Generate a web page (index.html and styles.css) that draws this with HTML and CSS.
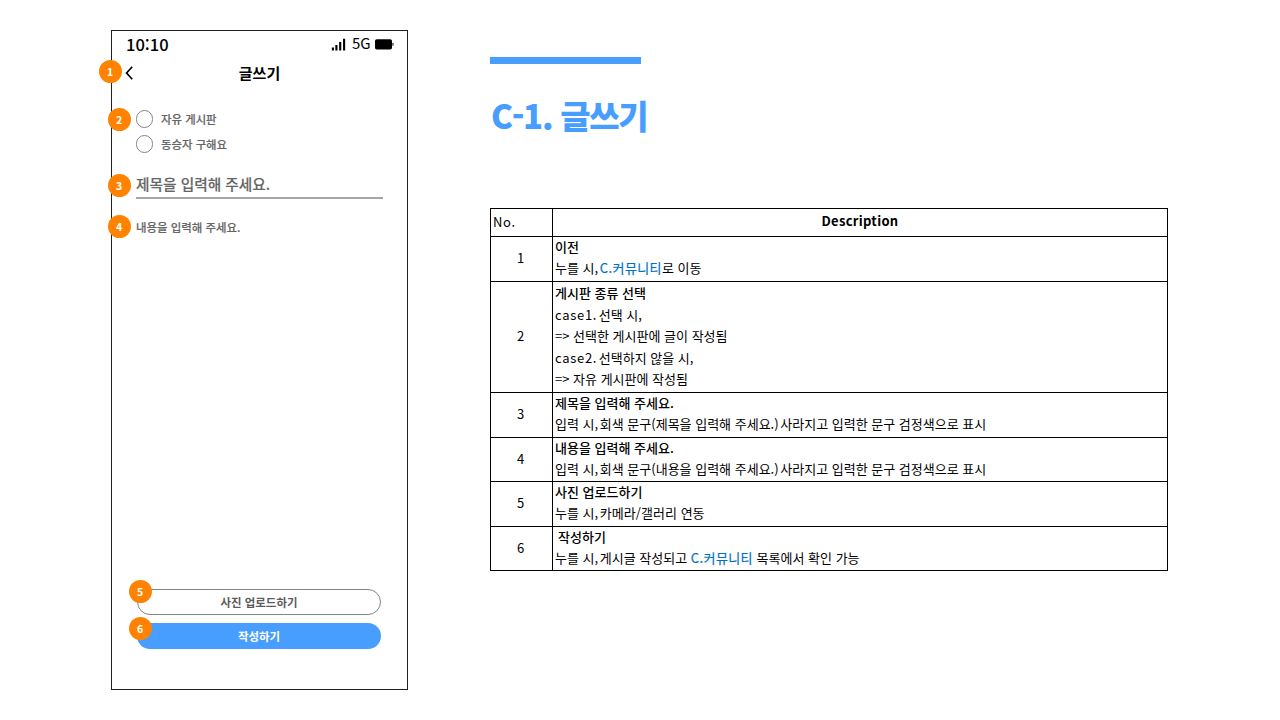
FILE: index.html
```html
<!DOCTYPE html>
<html lang="ko">
<head>
<meta charset="utf-8">
<title>C-1. 글쓰기</title>
<link rel="stylesheet" href="styles.css">
</head>
<body>
<main class="page">
  <section class="phone">
    <div class="status">
      <span class="time">10:10</span>
      <svg class="signal" width="15" height="13" viewBox="0 0 15 13"><path d="M1.9 12.5V9.5M5.4 12.5V7M9.2 12.5V4M13.1 12.5V.8" stroke="#000" stroke-width="2.1" fill="none"/></svg>
      <span class="network">5G</span>
      <svg class="battery" width="20" height="11" viewBox="0 0 20 11"><rect x="0" y=".3" width="17" height="10.2" rx="1.8"/><rect x="17.2" y="3.8" width="1.5" height="3" rx=".6" fill="#555"/></svg>
    </div>
    <header class="topbar">
      <i class="badge b1">1</i>
      <svg class="back" width="9" height="14" viewBox="0 0 9 14"><path d="M7.2 .8L1.6 7l5.6 6.2" fill="none" stroke="#000" stroke-width="1.7"/></svg>
      <h2 class="screen-title">글쓰기</h2>
    </header>
    <div class="boards">
      <i class="badge b2">2</i>
      <label class="option"><span class="radio"></span>자유 게시판</label>
      <label class="option"><span class="radio"></span>동승자 구해요</label>
    </div>
    <div class="subject"><i class="badge b3">3</i><span>제목을 입력해 주세요.</span></div>
    <div class="content"><i class="badge b4">4</i><span>내용을 입력해 주세요.</span></div>
    <div class="actions">
      <div class="btn outline"><i class="badge b5">5</i>사진 업로드하기</div>
      <div class="btn solid"><i class="badge b6">6</i>작성하기</div>
    </div>
  </section>
  <section class="doc">
    <div class="bar"></div>
    <h1 class="title">C-1. 글쓰기</h1>
    <div class="table">
      <div class="no head">No.</div>
      <div class="desc head center"><b>Description</b></div>
      <div class="no">1</div>
      <div class="desc"><b>이전</b><p>누를 시,<span class="tight"> </span><a>C.커뮤니티</a>로 이동</p></div>
      <div class="no">2</div>
      <div class="desc tall"><b>게시판 종류 선택</b><p><span class="latin">case1.</span><span class="tight"> </span>선택 시,</p><p>=&gt; 선택한 게시판에 글이 작성됨</p><p><span class="latin">case2.</span><span class="tight"> </span>선택하지 않을 시,</p><p>=&gt; 자유 게시판에 작성됨</p></div>
      <div class="no">3</div>
      <div class="desc"><b>제목을 입력해 주세요.</b><p>입력 시,<span class="tight"> </span>회색 문구(제목을 입력해 주세요.)<span class="tight"> </span>사라지고 입력한 문구 검정색으로 표시</p></div>
      <div class="no">4</div>
      <div class="desc"><b>내용을 입력해 주세요.</b><p>입력 시,<span class="tight"> </span>회색 문구(내용을 입력해 주세요.)<span class="tight"> </span>사라지고 입력한 문구 검정색으로 표시</p></div>
      <div class="no">5</div>
      <div class="desc"><b>사진 업로드하기</b><p>누를 시,<span class="tight"> </span>카메라<span class="slash">/</span>갤러리 연동</p></div>
      <div class="no">6</div>
      <div class="desc"><b class="indent">작성하기</b><p>누를 시,<span class="tight"> </span>게시글 작성되고 <a>C.커뮤니티</a> 목록에서 확인 가능</p></div>
    </div>
  </section>
</main>
</body>
</html>
```
FILE: styles.css
```css
* { box-sizing: border-box; }
body { margin: 0; background: #fff; color: #000; font-family: "Noto Sans CJK KR", sans-serif; }
h1, h2, p { margin: 0; }
.page { display: flex; width: 1280px; height: 720px; padding: 30px 0 0 111px; overflow: hidden; }

.phone { display: flex; flex-direction: column; width: 297px; height: 660px; border: 1px solid #231f20; }
.status { display: flex; align-items: center; height: 27px; padding: 0 12px 0 14px; }
.time { flex: 1; font-weight: 500; font-size: 16.5px; line-height: 27px; }
.signal { margin-right: 6px; }
.network { width: 20px; margin-right: 3px; padding-bottom: 3px; font-size: 15px; line-height: 24px; }
.topbar { position: relative; display: flex; align-items: center; height: 29px; padding-left: 13px; }
.screen-title { flex: 1; padding-right: 22px; text-align: center; font-size: 15px; line-height: 29px; font-weight: 700; }

.badge { position: absolute; width: 23px; height: 23px; border-radius: 50%; background: #ff8200; color: #fff; font-size: 10.5px; line-height: 23px; font-weight: 700; font-style: normal; text-align: center; text-indent: -1px; -webkit-text-stroke: 0; }
.b1 { left: -13px; top: 2px; }
.b2 { left: -28px; top: 0; }
.b3 { left: -28px; top: 2px; }
.b4 { left: -28px; top: 1px; }
.b5 { left: -9px; top: -10px; }
.b6 { left: -8px; top: -6px; }

.boards { position: relative; display: grid; grid-template-rows: 25px 25px; margin: 21px 0 0 24px; color: #666; }
.option { display: flex; align-items: center; gap: 8px; height: 24px; margin: -1px 0 0 -.5px; font-size: 11.4px; font-weight: 500; }
.option, .subject, .content { -webkit-text-stroke: .15px #666; }
.radio { width: 17.5px; height: 17.5px; border: 1.4px solid #858585; border-radius: 50%; }
.subject { position: relative; width: 247px; height: 27px; margin: 14px 0 0 24px; border-bottom: 2px solid #a6a6a6; color: #666; font-size: 14.7px; line-height: 24px; font-weight: 500; }
.content { position: relative; margin: 15px 0 0 24px; color: #666; font-size: 11.45px; line-height: 26px; font-weight: 500; }
.actions { display: grid; gap: 8px; margin: auto 26px 40px 25px; }
.btn { position: relative; height: 26px; border-radius: 13px; font-size: 11.45px; line-height: 26px; font-weight: 700; text-align: center; }
.outline { border: 1.4px solid #858585; color: #5c5c5c; line-height: 25px; }
.solid { background: #479eff; color: #fff; }

.doc { width: 678px; margin-left: 82px; padding-top: 27px; }
.bar { width: 151px; height: 7px; background: #479eff; }
.title { height: 144px; padding: 26px 0 0 1px; color: #479eff; font-size: 33px; line-height: 50px; font-weight: 900; letter-spacing: -1.3px; white-space: nowrap; }
.table { display: grid; grid-template-columns: 62px 615px; grid-template-rows: 28px 45px 111px 45px 44px 45px 44px; border: solid #000; border-width: 0 1px 1px 0; font-size: 13px; line-height: 21.5px; white-space: nowrap; width: 678px; }
.no, .desc { border: solid #000; border-width: 1px 0 0 1px; }
.no { display: flex; align-items: center; justify-content: center; padding: 0 2px 2px 0; }
.no.head { justify-content: flex-start; padding-left: 2px; letter-spacing: .6px; }
.desc { padding-left: 2px; }
.desc > :first-child { margin-top: -1.5px; }
.tall > :first-child { margin-top: 0; }
.desc.center { padding: 2px 0 0 0; text-align: center; }
.desc b { display: block; font-weight: 500; }
.desc.center b { font-weight: 700; letter-spacing: .3px; }
.desc a { color: #0070c0; letter-spacing: .4px; -webkit-text-stroke: .2px #0078c8; }
.latin { letter-spacing: .7px; }
.tight { letter-spacing: -2px; }
.slash { letter-spacing: .3px; }
.indent { padding-left: 3px; }
```
